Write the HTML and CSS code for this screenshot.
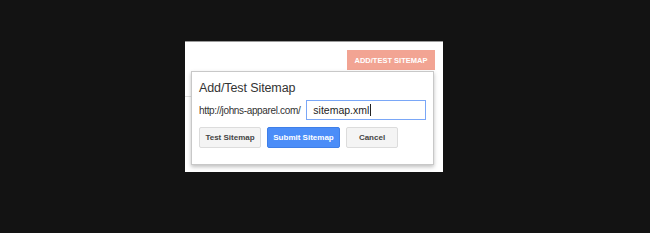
FILE: index.html
```html
<!DOCTYPE html>
<html lang="en">
<head>
  <meta charset="UTF-8" />
  <title>Add/Test Sitemap</title>
  <link rel="stylesheet" href="styles.css">
</head>
<body>
  <div class="painel">
    <div class="topo">
      <button class="btn-add">ADD/TEST SITEMAP</button>
    </div>
    <div class="linha"></div>
    <div class="dialogo">
      <h2>Add/Test Sitemap</h2>
      <div class="campo">
        <span class="url">http://johns-apparel.com/</span>
        <div class="entrada">sitemap.xml<span class="cursor"></span></div>
      </div>
      <div class="botoes">
        <button class="btn teste">Test Sitemap</button>
        <button class="btn azul">Submit Sitemap</button>
        <button class="btn cancelar">Cancel</button>
      </div>
    </div>
  </div>
</body>
</html>
```

FILE: styles.css
```css
* {
  box-sizing: border-box;
}

body {
  margin: 0;
  height: 233px;
  background: #131313;
  font-family: 'Liberation Sans', Arial, sans-serif;
  overflow: hidden;
}

.painel {
  position: relative;
  margin: 41px 0 0 185px;
  width: 258px;
  height: 131px;
  background: #fff;
  border-top: 1px solid #9a9a9a;
}

.topo {
  display: flex;
  justify-content: flex-end;
  padding: 8px 8px 0 0;
}

.btn-add {
  width: 88px;
  height: 20px;
  padding: 0;
  border: none;
  background: #f2a493;
  color: #fff;
  font-family: inherit;
  font-size: 7.5px;
  font-weight: bold;
  white-space: nowrap;
}

.linha {
  margin-top: 26px;
  height: 1px;
  width: 100px;
  background: #e0e0e0;
}

.dialogo {
  position: absolute;
  left: 6px;
  top: 29px;
  width: 243px;
  height: 94px;
  padding: 8px 7px 6px 7px;
  background: #fff;
  border: 1px solid #c8c8c8;
  box-shadow: 0 2px 4px rgba(0, 0, 0, 0.25);
}

.dialogo h2 {
  margin: 0;
  font-size: 12.5px;
  font-weight: normal;
  color: #333;
  line-height: 16px;
  letter-spacing: -0.1px;
}

.campo {
  display: flex;
  align-items: center;
  gap: 6px;
  margin-top: 4px;
}

.url {
  flex-shrink: 0;
  white-space: nowrap;
  font-size: 10px;
  letter-spacing: -0.35px;
  color: #333;
}

.entrada {
  display: flex;
  align-items: center;
  flex-shrink: 0;
  width: 120px;
  height: 20px;
  padding-left: 6px;
  border: 1px solid #7aa7f7;
  font-size: 10.5px;
  color: #222;
}

.cursor {
  display: inline-block;
  width: 1px;
  height: 12px;
  margin-left: 1px;
  background: #222;
}

.botoes {
  display: flex;
  gap: 6px;
  margin-top: 7px;
}

.btn {
  height: 21px;
  padding: 0;
  border: 1px solid #dcdcdc;
  border-radius: 2px;
  background: #f4f4f4;
  color: #444;
  font-family: inherit;
  font-size: 8px;
  font-weight: bold;
  white-space: nowrap;
}

.btn.teste {
  width: 62px;
}

.btn.azul {
  width: 73px;
  background: #4b8df8;
  border-color: #3f7fe8;
  color: #fff;
}

.btn.cancelar {
  width: 52px;
}
```
